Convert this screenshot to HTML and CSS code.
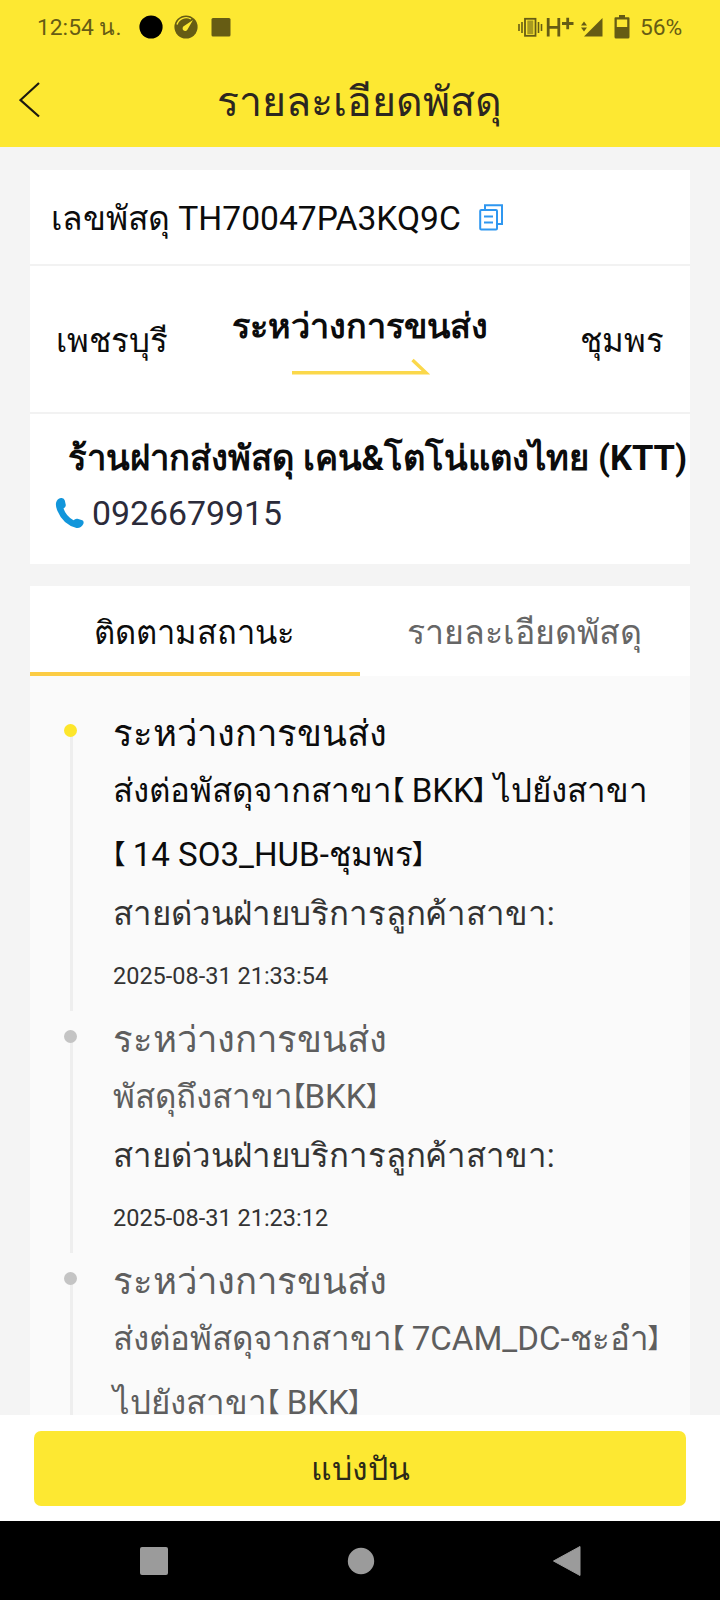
FILE: index.html
```
<!DOCTYPE html>
<html lang="th">
<head>
<meta charset="utf-8">
<title>รายละเอียดพัสดุ</title>
<link rel="stylesheet" href="styles.css">
</head>
<body>
<header class="top">
  <div class="status">
    <span class="clock">12:54 น.</span>
    <svg class="left-icons" width="94" height="26" viewBox="0 0 94 26">
      <circle cx="13" cy="13" r="11.6" fill="#000"/>
      <circle cx="48" cy="13" r="11.6" fill="#665c14"/>
      <path d="M39 10.500A9.500 9.500 0 0 1 53 5" fill="none" stroke="#fde92f" stroke-width="1.400"/>
      <path d="M55 6 49.500 15.500A2.600 2.600 0 1 1 46 12Z" fill="#fde92f"/>
      <rect x="73.500" y="4" width="19" height="18.500" rx="1.500" fill="#665c14"/>
    </svg>
    <span class="spacer"></span>
    <svg class="right-icons" width="114" height="26" viewBox="0 0 114 26" fill="#665c14">
      <path d="M1 10v7M4 8v11M20.500 8v11M23.500 10v7" stroke="#665c14" stroke-width="1.600"/>
      <rect x="7" y="4.800" width="10.500" height="17" fill="none" stroke="#665c14" stroke-width="1.800"/>
      <rect x="9.300" y="6.500" width="6" height="13.600" fill="#a89a20"/>
      <path d="M30.200 4v18.500M40.800 4v18.500M30 13.300h11M44 9.500h11.500M49.700 3.700v11.600" fill="none" stroke="#665c14" stroke-width="2.800"/>
      <path d="M63 11.500l3-4 3 4zM63 13.500l3 4 3-4z"/>
      <path d="M84.500 4v18.500H66z"/>
      <path d="M101 1h6v2.200h3.500q1 0 1 1V23q0 1.500-1.500 1.500H98q-1.500 0-1.500-1.500V4.200q0-1 1-1h3.500zM98.800 5.500V13h10.400V5.500z" fill-rule="evenodd"/>
    </svg>
    <span class="percent">56%</span>
  </div>
  <div class="titlebar">
    <svg class="back" width="22" height="36" viewBox="0 0 22 36"><path d="M20 1 1.500 18 20 34.500" fill="none" stroke="#1d1a10" stroke-width="2.200"/></svg>
    <h1 class="title">รายละเอียดพัสดุ</h1>
  </div>
</header>

<main class="content">
  <section class="card">
    <div class="number-row">
      <span>เลขพัสดุ TH70047PA3KQ9C</span>
      <svg class="copy" width="25" height="27" viewBox="0 0 25 27" fill="none" stroke="#2f97f0" stroke-width="2">
        <path d="M6 5.500V1.200H23V20H18.500"/><rect x="1.200" y="6" width="16.800" height="19.500" rx="1"/><path d="M5 12.500h9M5 18.500h9"/>
      </svg>
    </div>
    <div class="route">
      <span class="place from">เพชรบุรี</span>
      <div class="state">
        <strong class="state-name">ระหว่างการขนส่ง</strong>
        <svg class="arrow" width="138" height="18" viewBox="0 0 138 18"><path d="M0 14.700h134L120.500 2" fill="none" stroke="#fbd84a" stroke-width="3.400"/></svg>
      </div>
      <span class="place to">ชุมพร</span>
    </div>
    <div class="shop">
      <strong class="shop-name">ร้านฝากส่งพัสดุ เคน&amp;โตโน่แตงไทย (KTT)</strong>
      <div class="phone">
        <svg width="30" height="32" viewBox="0 0 30 32"><path d="M1 6Q2 1.500 6 1q3-.5 3.800 2.500l1 4.500q.2 2-2.300 3.500Q11 19 18.500 23.300q2-2 4-1.500l4.800 1.500q2 1 1 3.700Q26 31.500 21.500 31 8 27.500 2.500 14 .5 9.500 1 6Z" fill="#1296db"/></svg>
        <span>0926679915</span>
      </div>
    </div>
  </section>

  <section class="tracking">
    <nav class="tabs">
      <span class="tab active">ติดตามสถานะ</span>
      <span class="tab">รายละเอียดพัสดุ</span>
    </nav>
    <ol class="timeline">
      <li class="event current">
        <h2 class="event-title">ระหว่างการขนส่ง</h2>
        <p class="desc">ส่งต่อพัสดุจากสาขา<span class="br">【</span> BKK<span class="br">】</span> ไปยังสาขา<br><span class="br">【</span> 14 SO3_HUB-ชุมพร<span class="br">】</span></p>
        <p class="hotline">สายด่วนฝ่ายบริการลูกค้าสาขา:</p>
        <time class="time">2025-08-31 21:33:54</time>
      </li>
      <li class="event">
        <h2 class="event-title">ระหว่างการขนส่ง</h2>
        <p class="desc">พัสดุถึงสาขา<span class="br">【</span>BKK<span class="br">】</span></p>
        <p class="hotline">สายด่วนฝ่ายบริการลูกค้าสาขา:</p>
        <time class="time">2025-08-31 21:23:12</time>
      </li>
      <li class="event">
        <h2 class="event-title">ระหว่างการขนส่ง</h2>
        <p class="desc">ส่งต่อพัสดุจากสาขา<span class="br">【</span> 7CAM_DC-ชะอำ<span class="br">】</span><br>ไปยังสาขา<span class="br">【</span> BKK<span class="br">】</span></p>
      </li>
    </ol>
  </section>
</main>

<footer class="actions"><button class="share">แบ่งปัน</button></footer>
<div class="navbar">
  <svg width="30" height="32" viewBox="0 0 30 32"><rect x="1" y="2" width="28" height="28" rx="2" fill="#9b9b9b"/></svg>
  <svg width="30" height="32" viewBox="0 0 30 32"><circle cx="15" cy="16" r="13.200" fill="#9b9b9b"/></svg>
  <svg width="30" height="32" viewBox="0 0 30 32"><path d="M28 1.500v29L1.500 16Z" fill="#9b9b9b" stroke="#9b9b9b" stroke-linejoin="round"/></svg>
</div>
</body>
</html>
```
FILE: styles.css
```
* { box-sizing: border-box; }
body {
  margin: 0;
  width: 720px;
  height: 1600px;
  display: flex;
  flex-direction: column;
  overflow: hidden;
  background: #f4f4f4;
  color: #0c0c0c;
  font-family: Roboto, "Noto Sans CJK SC", sans-serif;
  font-size: 33.600px;
  white-space: nowrap;
}
h1, h2, p, ol { margin: 0; padding: 0; font-weight: 400; }
svg { display: block; flex: none; }

.top { flex: none; height: 147px; background: #fde832; }
.status {
  height: 54px;
  padding: 0 37px;
  display: flex;
  align-items: center;
  color: #665c14;
  font-size: 22.800px;
}
.clock { width: 101px; }
.spacer { flex: 1; }
.percent { margin-left: 8px; width: 43px; }
.titlebar { height: 93px; position: relative; }
.back { position: absolute; left: 19px; top: 28px; }
.title { padding-right: 1px; font-size: 41.100px; line-height: 97px; text-align: center; color: #2c2620; }

.content { flex: 1; min-height: 0; overflow: hidden; padding: 23px 30px 0; }
.card { height: 394px; background: #fff; }
.number-row {
  height: 96px;
  padding: 1px 0 0 21px;
  display: flex;
  align-items: center;
  gap: 18px;
  border-bottom: 2px solid #f2f2f2;
}
.route {
  height: 148px;
  padding: 0 26px 0 26px;
  display: flex;
  border-bottom: 2px solid #f2f2f2;
}
.place { line-height: 149px; font-size: 33px; }
.place.from { width: 176px; }
.place.to { margin-left: auto; }
.state { width: 256px; display: flex; flex-direction: column; padding-top: 35px; }
.state-name { line-height: 50px; font-size: 34.200px; }
.arrow { margin: 7px 0 0 60px; }
.shop { padding-top: 19px; }
.shop-name { display: block; padding-left: 38px; line-height: 50px; font-size: 34.550px; }
.phone {
  height: 60px;
  padding-left: 25px;
  display: flex;
  align-items: center;
  gap: 7px;
  font-size: 33.800px;
  color: #2b2b3a;
}

.tracking { margin-top: 22px; }
.tabs { height: 90px; display: flex; background: #fff; }
.tab { flex: 1; padding-right: 1px; text-align: center; line-height: 93px; font-size: 33.900px; color: #666; }
.tab.active { line-height: 94px; font-size: 32.700px; color: #0c0c0c; border-bottom: 4px solid #fccc44; }
.timeline { height: 800px; padding: 32px 0 0 83px; list-style: none; background: #fafafa; }
.event { position: relative; margin-bottom: 3px; color: #5e5e5e; }
.event::before {
  content: "";
  position: absolute;
  left: -43px;
  top: 25px;
  bottom: 0;
  width: 3px;
  background: #eee;
}
.event::after {
  content: "";
  position: absolute;
  left: -49px;
  top: 16px;
  width: 13px;
  height: 13px;
  border-radius: 50%;
  background: #c4c4c4;
}
.event.current::after { background: #fde62b; }
.current { color: #0c0c0c; }
.event-title { font-size: 36.500px; line-height: 51px; }
.desc { line-height: 64px; font-size: 33.100px; }
.br {
  font-size: 27px;
  line-height: 1;
  vertical-align: 2px;
  font-feature-settings: "halt";
  margin: 0 -1px;
}
.hotline { line-height: 54px; font-size: 33px; letter-spacing: -0.100px; color: #333; }
.time { display: block; line-height: 70px; font-size: 23.500px; color: #333; }

.actions { flex: none; height: 106px; padding: 16px 34px 15px; background: #fff; }
.share {
  display: block;
  width: 100%;
  height: 75px;
  padding: 0;
  border: 0;
  border-radius: 7px;
  background: #fde832;
  color: #2c2a18;
  font: inherit;
  font-size: 32px;
}
.navbar {
  flex: none;
  height: 79px;
  padding: 0 138px 0 139px;
  display: flex;
  align-items: center;
  justify-content: space-between;
  background: #000;
}
```
